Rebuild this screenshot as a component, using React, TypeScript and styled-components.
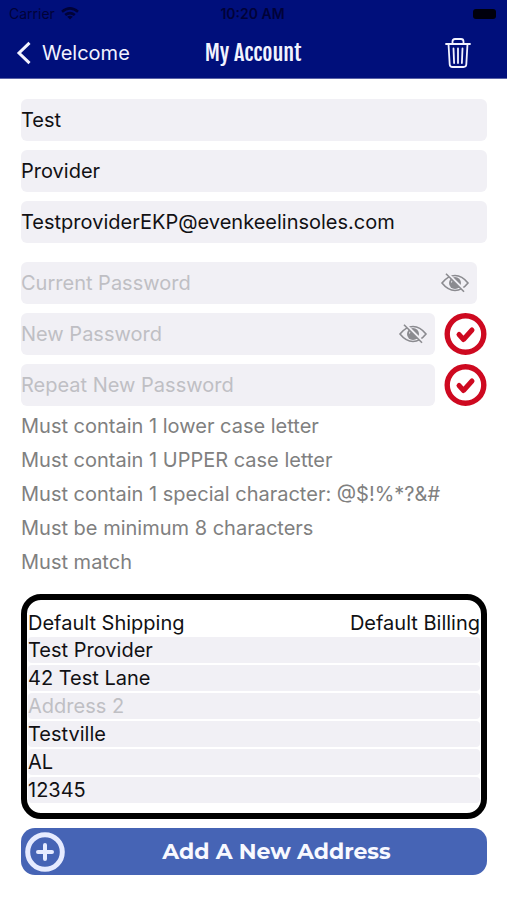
import React, { useState } from "react";
import styled, { createGlobalStyle } from "styled-components";

const GlobalStyle = createGlobalStyle`
  *, *::before, *::after { box-sizing: border-box; }
  body {
    margin: 0;
    background: #fff;
    color: #111114;
    font-family: Inter, "Liberation Sans", sans-serif;
  }
  button, input {
    font: inherit;
    color: inherit;
    margin: 0;
    padding: 0;
    border: 0;
    background: none;
  }
  button { cursor: pointer; }
  svg { display: block; }
`;

const Page = styled.div`
  font-size: 20px;
  line-height: 26px;
`;

const Header = styled.header`
  background: #000f7b;
  border-bottom: 1px solid #5a62a6;
`;

const StatusBar = styled.div`
  display: grid;
  grid-template-columns: 1fr auto 1fr;
  align-items: center;
  height: 27px;
  padding: 0 11px 0 9px;
  color: #000238;
  font-size: 14px;
  line-height: 20px;
`;

const Carrier = styled.span`
  display: flex;
  align-items: center;
  gap: 6px;
`;

const Clock = styled.span`
  font-weight: 600;
`;

const Battery = styled.span`
  justify-self: end;
  width: 23px;
  height: 10px;
  border-radius: 3px;
  background: #00000c;
`;

const NavBar = styled.div`
  display: grid;
  grid-template-columns: 1fr auto 1fr;
  align-items: center;
  height: 51px;
  padding: 0 35px 0 16px;
  color: #f2f3ff;
`;

const BackLink = styled.a`
  display: flex;
  align-items: center;
  gap: 10px;
  color: inherit;
  text-decoration: none;
`;

const Title = styled.h1`
  margin: 0;
  padding-left: 18px;
  font-family: "Fjalla One", "Liberation Sans Narrow", "Open Sans Condensed", sans-serif;
  font-size: 22px;
  line-height: 28px;
  font-weight: 400;
`;

const DeleteButton = styled.button`
  justify-self: end;
`;

const Main = styled.main`
  display: flex;
  flex-direction: column;
  padding: 20px 20px 24px 21px;
`;

const FieldGroup = styled.div`
  display: flex;
  flex-direction: column;
  gap: 9px;
`;

const PasswordGroup = styled(FieldGroup)`
  margin-top: 19px;
`;

const PasswordRow = styled.div`
  display: flex;
  align-items: center;
  gap: 9px;
`;

const Field = styled.div<{ $inset?: boolean }>`
  display: flex;
  flex: 1;
  align-items: center;
  min-width: 0;
  height: 42px;
  margin-right: ${(p) => (p.$inset ? "10px" : "0")};
  padding-right: 7px;
  border-radius: 6px;
  background: #f1f0f5;
`;

const TextInput = styled.input`
  flex: 1;
  min-width: 0;
  width: 100%;
  height: 100%;
  outline: none;
  &::placeholder {
    color: #bfbfc4;
    opacity: 1;
  }
`;

const StackedField = styled(Field)`
  flex: none;
`;

const Rules = styled.ul`
  display: flex;
  flex-direction: column;
  gap: 8px;
  margin: 7px 0 0;
  padding: 0;
  list-style: none;
  color: #808080;
`;

const AddressCard = styled.section`
  display: flex;
  flex-direction: column;
  gap: 2px;
  margin-top: 19px;
  padding: 10px 1px;
  border: 6px solid #000;
  border-radius: 20px;
`;

const DefaultRow = styled.div`
  display: flex;
  justify-content: space-between;
  height: 25px;
`;

const AddressInput = styled(TextInput)`
  flex: none;
  height: 26px;
  border-radius: 4px;
  background: #f1f0f5;
`;

const AddButton = styled.button`
  display: grid;
  grid-template-columns: 40px 1fr;
  column-gap: 5px;
  align-items: center;
  height: 47px;
  margin-top: 9px;
  padding: 0 4px;
  border-radius: 14px;
  background: #4664b5;
  color: #f8f9ff;
  font-family: Montserrat, Inter, sans-serif;
  font-size: 22px;
  font-weight: 700;
`;

const WifiIcon = () => (
  <svg width="18" height="13" viewBox="0 0 18 13" aria-hidden="true">
    <g fill="none" stroke="currentColor" strokeWidth="2.6">
      <path d="M1 4.8Q9-2 17 4.8" />
      <path d="M4.2 8.1Q9 4 13.8 8.1" />
    </g>
    <path d="M6.2 9.7Q9 7.6 11.8 9.7L9 12.6Z" fill="currentColor" />
  </svg>
);

const BackIcon = () => (
  <svg width="16" height="24" viewBox="0 0 16 24" aria-hidden="true">
    <path d="M13.5 1.8 3 12l10.5 10.2" fill="none" stroke="currentColor" strokeWidth="3" />
  </svg>
);

const TrashIcon = () => (
  <svg width="28" height="32" viewBox="0 0 28 32" fill="none" stroke="currentColor" strokeWidth="1.8" strokeLinecap="round" strokeLinejoin="round" aria-hidden="true">
    <path d="M2 7h24M8.5 7V4.500Q8.500 2 11 2h6Q19.500 2 19.500 4.500V7" />
    <path d="m4.500 7 1.200 20.500Q5.900 30 8.500 30h11q2.600 0 2.800-2.500L23.500 7" />
    <path d="m9.500 11.500.6 14.500M14 11.500V26M18.500 11.500 17.900 26" />
  </svg>
);

const EyeOffIcon = () => (
  <svg width="30" height="22" viewBox="0 0 30 22" aria-hidden="true">
    <path d="M2 11Q8 3.500 15 3.500T28 11Q22 18.500 15 18.500T2 11Z" fill="none" stroke="#8b8b90" strokeWidth="1.600" />
    <circle cx="15" cy="11" r="6" fill="#8b8b90" />
    <path d="M14 7.500a3 3 0 0 0-2.500 3" fill="none" stroke="#f1f0f5" strokeWidth="1" />
    <path d="m7 1 18 18" stroke="#f1f0f5" strokeWidth="2.500" />
    <path d="m6 1.800 18 18" stroke="#8b8b90" strokeWidth="1.600" />
  </svg>
);

const CheckIcon = () => (
  <svg width="43" height="42" viewBox="0 0 43 42" fill="none" stroke="#ce0920" role="img" aria-label="Requirement status">
    <circle cx="21.500" cy="21" r="18.300" strokeWidth="5.400" />
    <path d="m15 21.500 4.500 5 8.500-9.500" strokeWidth="5" strokeLinecap="round" strokeLinejoin="round" />
  </svg>
);

const PlusIcon = () => (
  <svg width="40" height="42" viewBox="0 0 40 42" fill="none" stroke="#e6ebff" aria-hidden="true">
    <circle cx="20" cy="21" r="17.300" strokeWidth="5" />
    <path d="M20 14v14M13 21h14" strokeWidth="4" strokeLinecap="round" />
  </svg>
);

const profile = [
  { label: "First name", value: "Test", type: "text" },
  { label: "Last name", value: "Provider", type: "text" },
  { label: "Email", value: "TestproviderEKP@evenkeelinsoles.com", type: "email" },
];

const passwords = [
  { label: "Current Password", toggle: true, check: false },
  { label: "New Password", toggle: true, check: true },
  { label: "Repeat New Password", toggle: false, check: true },
];

const rules = [
  "Must contain 1 lower case letter",
  "Must contain 1 UPPER case letter",
  "Must contain 1 special character: @$!%*?&#",
  "Must be minimum 8 characters",
  "Must match",
];

const address = [
  { label: "Name", value: "Test Provider" },
  { label: "Address 1", value: "42 Test Lane" },
  { label: "Address 2", value: "" },
  { label: "City", value: "Testville" },
  { label: "State", value: "AL" },
  { label: "Zip code", value: "12345" },
];

function PasswordField({ label, toggle, check }: { label: string; toggle: boolean; check: boolean }) {
  const [visible, setVisible] = useState(false);
  return (
    <PasswordRow>
      <Field $inset={!check}>
        <TextInput type={visible ? "text" : "password"} placeholder={label} aria-label={label} />
        {toggle && (
          <button type="button" aria-label={`Show ${label}`} aria-pressed={visible} onClick={() => setVisible(!visible)}>
            <EyeOffIcon />
          </button>
        )}
      </Field>
      {check && <CheckIcon />}
    </PasswordRow>
  );
}

export default function App() {
  return (
    <Page>
      <GlobalStyle />
      <Header>
        <StatusBar>
          <Carrier>Carrier <WifiIcon /></Carrier>
          <Clock>10:20 AM</Clock>
          <Battery />
        </StatusBar>
        <NavBar>
          <BackLink href="#welcome"><BackIcon />Welcome</BackLink>
          <Title>My Account</Title>
          <DeleteButton type="button" aria-label="Delete account"><TrashIcon /></DeleteButton>
        </NavBar>
      </Header>
      <Main>
        <FieldGroup>
          {profile.map((f) => (
            <StackedField key={f.label}>
              <TextInput type={f.type} defaultValue={f.value} aria-label={f.label} />
            </StackedField>
          ))}
        </FieldGroup>
        <PasswordGroup>
          {passwords.map((p) => <PasswordField key={p.label} {...p} />)}
        </PasswordGroup>
        <Rules>
          {rules.map((r) => <li key={r}>{r}</li>)}
        </Rules>
        <AddressCard>
          <DefaultRow>
            <button type="button">Default Shipping</button>
            <button type="button">Default Billing</button>
          </DefaultRow>
          {address.map((a) => (
            <AddressInput key={a.label} type="text" defaultValue={a.value} placeholder={a.label} aria-label={a.label} />
          ))}
        </AddressCard>
        <AddButton type="button"><PlusIcon /><span>Add A New Address</span></AddButton>
      </Main>
    </Page>
  );
}
